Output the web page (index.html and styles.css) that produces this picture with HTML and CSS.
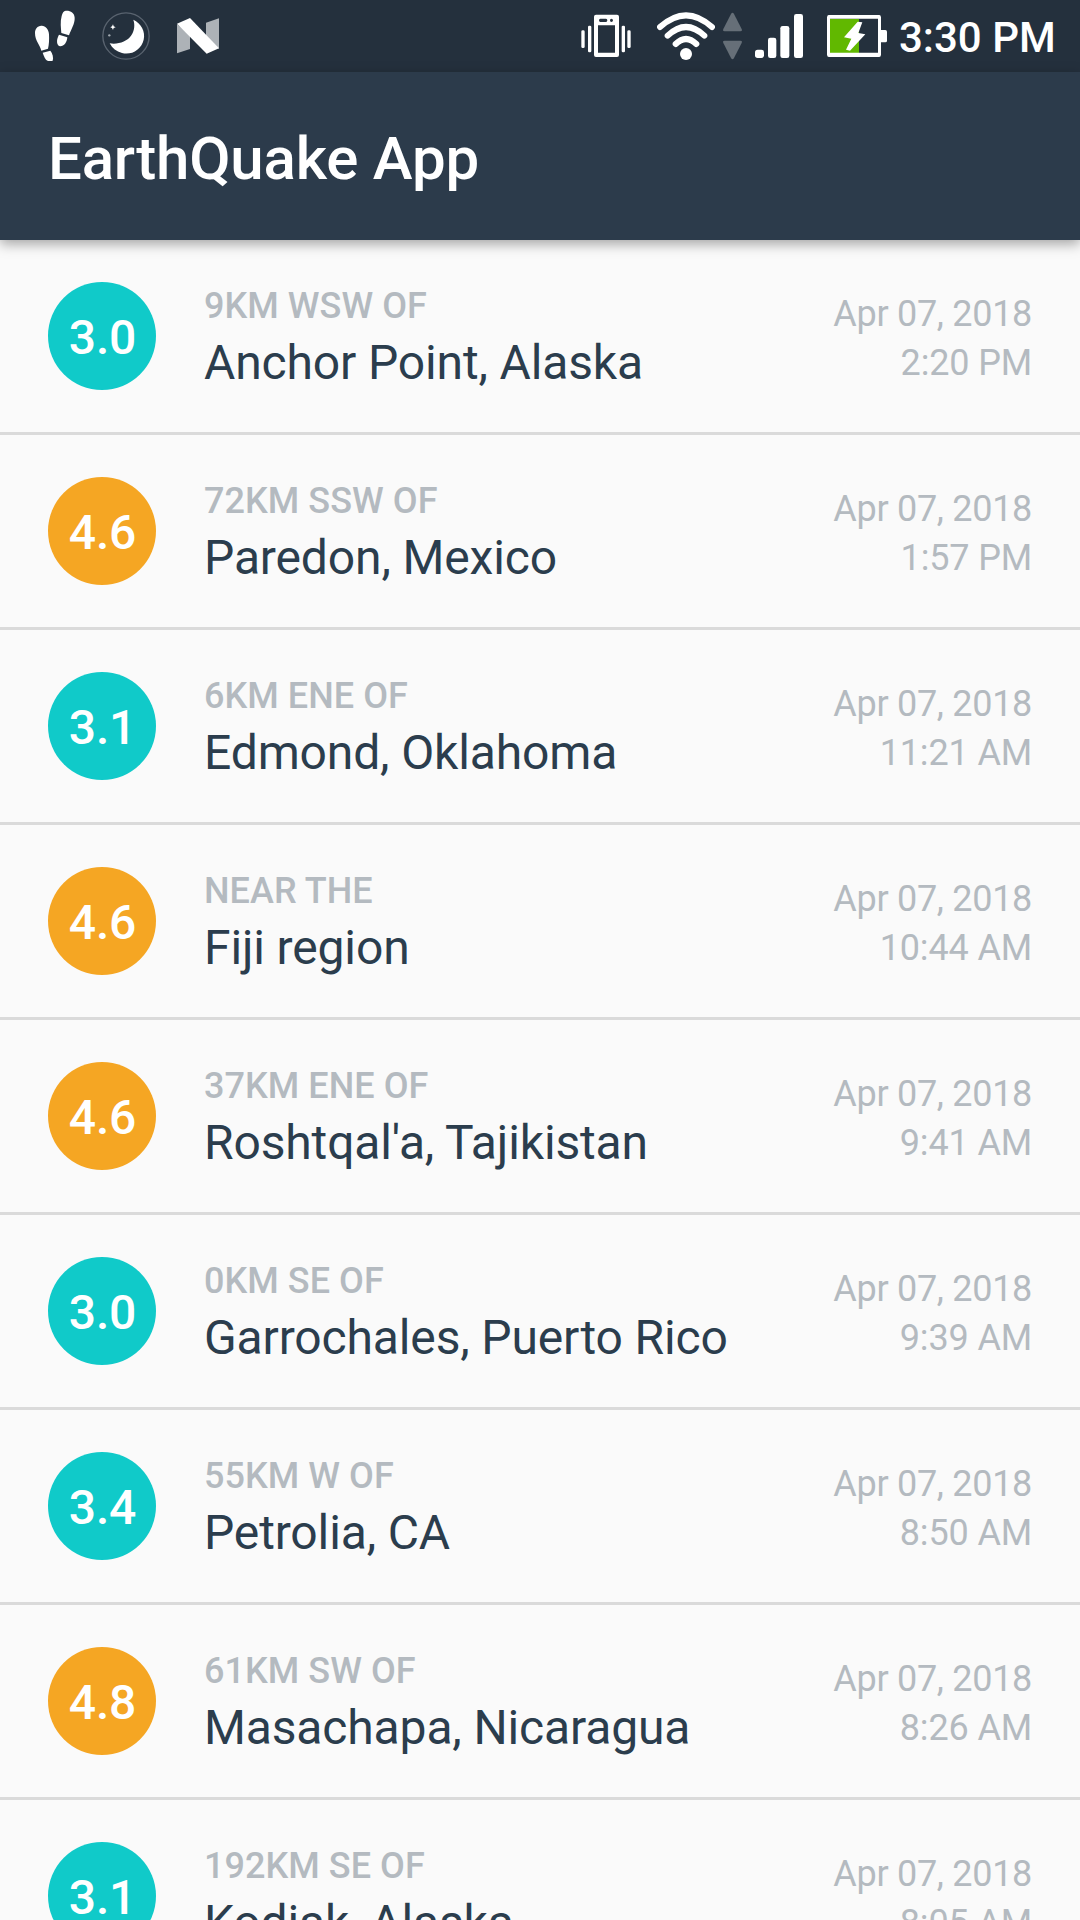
FILE: index.html
```html
<!DOCTYPE html>
<html lang="en">
<head>
<meta charset="utf-8">
<title>EarthQuake App</title>
<link rel="stylesheet" href="styles.css">
</head>
<body>
<div class="screen">
  <div class="status-bar">
    <div class="notifications">
      <svg width="40" height="72" viewBox="45 0 120 216" fill="#fff">
        <path d="M64 77C76 76 86 87 87 103C88 120 87 134 84 146L64 152C60 135 45 122 45 99C45 86 52 78 64 77Z"/>
        <path d="M68 158L91 152C98 160 101 174 98 182Q97 183 91 183H84C76 180 72 170 68 158Z"/>
        <path d="M137 32C151 31 163 37 164 53C165 72 153 87 147 106L124 99C123 84 120 67 125 48C127 38 131 33 137 32Z"/>
        <path d="M117 104L142 112C141 127 132 139 121 139C109 137 108 120 117 104Z"/>
      </svg>
      <svg width="48" height="72" viewBox="246 0 144 216">
        <circle cx="318" cy="108" r="69.500" fill="none" stroke="#59636f" stroke-width="4"/>
        <path d="M340 59C363 70 377 94 371 119C364 149 335 166 306 159C289 155 277 145 269 130C293 134 321 126 334 106C344 91 345 74 340 59Z" fill="#fff"/>
        <path d="M279 73L281 79L287 82L281 84L279 90L276 84L271 82L276 79Z" fill="#fff"/>
        <circle cx="268" cy="106" r="3.500" fill="#a4abb2"/>
      </svg>
      <svg width="42" height="72" viewBox="471 0 126 216">
        <path d="M471 72L510 106V147L471 160Z M558 68L597 55V147L558 108Z" fill="#adb2b7"/>
        <path d="M471 71L510 54L597 145L560 161Z" fill="#fff"/>
      </svg>
    </div>
    <div class="system">
      <svg class="vibrate" width="50" height="72" viewBox="63 0 150 216" fill="#fff">
        <path fill-rule="evenodd" d="M108 44H171Q177 44 177 50V165Q177 171 171 171H108Q102 171 102 165V50Q102 44 108 44ZM114 76V158H165V76ZM121 56Q117 56 117 61Q117 66 121 66H138Q142 66 142 61Q142 56 138 56ZM154 56Q150 56 150 61Q150 66 154 66Q159 66 159 61Q159 56 154 56Z"/>
        <rect x="64" y="91" width="10" height="53" rx="4"/>
        <rect x="84" y="77" width="10" height="80" rx="4"/>
        <rect x="185" y="77" width="10" height="80" rx="4"/>
        <rect x="202" y="91" width="10" height="53" rx="4"/>
      </svg>
      <svg class="wifi" width="58" height="72" viewBox="291 0 174 216" fill="none" stroke="#fff" stroke-width="18" stroke-linecap="round">
        <path d="M300 81Q378 11 456 81M323 107Q378 55 433 107M347 132Q378 102 409 132"/>
        <circle cx="378" cy="162" r="18" fill="#fff" stroke="none"/>
      </svg>
      <svg class="traffic" width="19" height="72" viewBox="489 0 57 216" fill="#666f78">
        <path d="M513 42Q517.500 34 522 42L545 87Q548 94 541 94H494Q487 94 490 87Z"/>
        <path d="M513 174Q517.500 182 522 174L545 129Q548 122 541 122H494Q487 122 490 129Z"/>
      </svg>
      <svg class="signal" width="48" height="72" viewBox="585 0 144 216" fill="#fff">
        <rect x="585" y="149" width="27" height="25" rx="8"/>
        <rect x="624" y="113" width="25" height="61" rx="7"/>
        <rect x="661" y="78" width="27" height="96" rx="7"/>
        <rect x="702" y="42" width="27" height="132" rx="7"/>
      </svg>
      <svg class="battery" width="60" height="72" viewBox="51 0 180 216">
        <rect x="60" y="57" width="87" height="102" fill="#61b800"/>
        <path d="M213 90H226Q231 90 231 95V122Q231 127 226 127H213Z" fill="#fff"/>
        <rect x="55.500" y="49.500" width="153" height="117" rx="2" fill="none" stroke="#fff" stroke-width="9"/>
        <path d="M55 51H209M55 164H209" stroke="#fff" stroke-width="11"/>
        <path d="M143 65L157 67L145 99L166 103L120 152L108 149L124 116L102 112Z" fill="#fff"/>
      </svg>
      <span class="clock">3:30 PM</span>
    </div>
  </div>
  <header class="app-bar"><h1 class="title">EarthQuake App</h1></header>
  <main class="quakes">
    <article class="quake">
      <div class="magnitude teal">3.0</div>
      <div class="location"><div class="offset">9KM WSW OF</div><div class="place">Anchor Point, Alaska</div></div>
      <div class="when"><div class="date">Apr 07, 2018</div><div class="time">2:20 PM</div></div>
    </article>
    <article class="quake">
      <div class="magnitude amber">4.6</div>
      <div class="location"><div class="offset">72KM SSW OF</div><div class="place">Paredon, Mexico</div></div>
      <div class="when"><div class="date">Apr 07, 2018</div><div class="time">1:57 PM</div></div>
    </article>
    <article class="quake">
      <div class="magnitude teal">3.1</div>
      <div class="location"><div class="offset">6KM ENE OF</div><div class="place">Edmond, Oklahoma</div></div>
      <div class="when"><div class="date">Apr 07, 2018</div><div class="time">11:21 AM</div></div>
    </article>
    <article class="quake">
      <div class="magnitude amber">4.6</div>
      <div class="location"><div class="offset">NEAR THE</div><div class="place">Fiji region</div></div>
      <div class="when"><div class="date">Apr 07, 2018</div><div class="time">10:44 AM</div></div>
    </article>
    <article class="quake">
      <div class="magnitude amber">4.6</div>
      <div class="location"><div class="offset">37KM ENE OF</div><div class="place">Roshtqal'a, Tajikistan</div></div>
      <div class="when"><div class="date">Apr 07, 2018</div><div class="time">9:41 AM</div></div>
    </article>
    <article class="quake">
      <div class="magnitude teal">3.0</div>
      <div class="location"><div class="offset">0KM SE OF</div><div class="place">Garrochales, Puerto Rico</div></div>
      <div class="when"><div class="date">Apr 07, 2018</div><div class="time">9:39 AM</div></div>
    </article>
    <article class="quake">
      <div class="magnitude teal">3.4</div>
      <div class="location"><div class="offset">55KM W OF</div><div class="place">Petrolia, CA</div></div>
      <div class="when"><div class="date">Apr 07, 2018</div><div class="time">8:50 AM</div></div>
    </article>
    <article class="quake">
      <div class="magnitude amber">4.8</div>
      <div class="location"><div class="offset">61KM SW OF</div><div class="place">Masachapa, Nicaragua</div></div>
      <div class="when"><div class="date">Apr 07, 2018</div><div class="time">8:26 AM</div></div>
    </article>
    <article class="quake">
      <div class="magnitude teal">3.1</div>
      <div class="location"><div class="offset">192KM SE OF</div><div class="place">Kodiak, Alaska</div></div>
      <div class="when"><div class="date">Apr 07, 2018</div><div class="time">8:05 AM</div></div>
    </article>
  </main>
</div>
</body>
</html>
```
FILE: styles.css
```css
* { box-sizing: border-box; }

body {
  margin: 0;
  background: #fafafa;
  font-family: Roboto, "Liberation Sans", sans-serif;
}

.screen {
  width: 1080px;
  height: 1920px;
  overflow: hidden;
  display: flex;
  flex-direction: column;
}

/* Status bar */
.status-bar {
  flex: none;
  height: 72px;
  padding: 0 24px 0 35px;
  display: flex;
  justify-content: space-between;
  background: #24303d;
}

.status-bar svg { display: block; flex: none; }

.notifications { display: flex; gap: 27px; }

.system { display: flex; }
.vibrate { margin-right: 26px; }
.wifi { margin-right: 8px; }
.traffic { margin-right: 13px; }
.signal { margin-right: 24px; }
.battery { margin-right: 12px; }

.clock {
  width: 157px;
  color: #fff;
  font-size: 42px;
  font-weight: 500;
  line-height: 76px;
  white-space: nowrap;
}

/* App bar */
.app-bar {
  flex: none;
  height: 168px;
  padding: 0 48px;
  display: flex;
  align-items: center;
  background: #2c3b4b;
  box-shadow: 0 4px 12px rgba(0, 0, 0, 0.35);
}

.title {
  margin: 0;
  padding-top: 6px;
  color: #fff;
  font-size: 60px;
  font-weight: 500;
  line-height: 70px;
  letter-spacing: -0.2px;
}

/* Earthquake list */
.quake {
  height: 195px;
  padding: 0 48px;
  display: flex;
  align-items: center;
  border-bottom: 3px solid #dadada;
}

.magnitude {
  flex: none;
  width: 108px;
  height: 108px;
  margin-right: 48px;
  padding-left: 1px;
  border-radius: 50%;
  color: #fff;
  font-size: 48px;
  font-weight: 500;
  line-height: 111px;
  letter-spacing: -0.2px;
  text-align: center;
}

.teal { background: #10cac9; }
.amber { background: #f5a623; }

.location {
  flex: 1;
  padding-top: 4px;
  white-space: nowrap;
}

.offset {
  color: #b4bac0;
  font-size: 36px;
  font-weight: 500;
  line-height: 49px;
  letter-spacing: 0.05px;
}

.place {
  color: #2b3d4d;
  font-size: 48px;
  line-height: 63px;
  letter-spacing: -0.14px;
}

.when {
  padding-top: 6px;
  color: #b4bac0;
  font-size: 36px;
  line-height: 49px;
  text-align: right;
}

.date { letter-spacing: -0.3px; }
.time { letter-spacing: -0.15px; }
```
